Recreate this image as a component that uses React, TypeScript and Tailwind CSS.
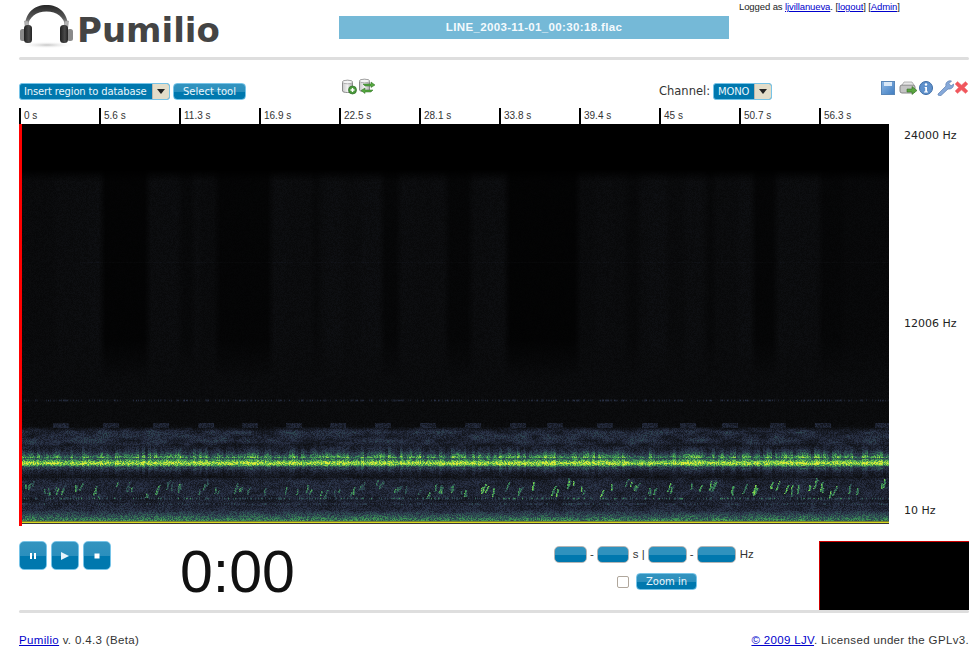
import { useEffect, useRef } from "react";

const ticks = ["0 s", "5.6 s", "11.3 s", "16.9 s", "22.5 s", "28.1 s", "33.8 s", "39.4 s", "45 s", "50.7 s", "56.3 s"];
const uiFont = "font-['DejaVu_Sans','Liberation_Sans',sans-serif]";
const armFont = "font-['Liberation_Sans',Arial,sans-serif]";
const btn =
  "border border-[#77c4e8] rounded-[4px] bg-[linear-gradient(#3394bf_0%,#2b8fbd_50%,#0078ae_52%,#0078ae_100%)] text-[#eaf6fb]";

function Spectrogram() {
  const ref = useRef<HTMLCanvasElement>(null);
  useEffect(() => {
    const c = ref.current;
    if (!c) return;
    const W = 870, H = 400;
    const ctx = c.getContext("2d");
    if (!ctx) return;
    const img = ctx.createImageData(W, H);
    let seed = 12345;
    const rnd = () => {
      seed = (seed * 1664525 + 1013904223) >>> 0;
      return seed / 4294967296;
    };
    const gauss = (y: number, c0: number, s: number) => Math.exp(-((y - c0) * (y - c0)) / (2 * s * s));
    const dark: [number, number, number][] = [
      [83, 128, 0.3], [161, 174, 0.7], [198, 251, 0.4], [294, 299, 0.7], [363, 379, 0.55], [428, 451, 0.5],
      [488, 558, 0.28], [608, 619, 0.7], [688, 694, 0.65], [734, 756, 0.45], [801, 824, 0.55], [824, 870, 0.7],
    ];
    const raw = new Float32Array(W);
    let cur = 1;
    for (let x = 0; x < W; x++) {
      if (x % 18 === 0) cur = 0.88 + rnd() * 0.25;
      let b = cur;
      for (const [a, z, k] of dark) if (x >= a && x <= z) b = k;
      raw[x] = b;
    }
    const band = new Float32Array(W);
    for (let x = 0; x < W; x++) {
      let s = 0, n = 0;
      for (let d = -3; d <= 3; d++) {
        if (x + d >= 0 && x + d < W) { s += raw[x + d]; n++; }
      }
      band[x] = s / n;
    }
    const stripe = new Float32Array(W);
    const dots = new Float32Array(W);
    const burst = new Float32Array(W);
    let st = 1;
    for (let x = 0; x < W; x++) {
      if (x % 3 === 0) st = 0.45 + rnd() * 0.95;
      stripe[x] = st;
      dots[x] = rnd() < 0.42 ? 0.6 + rnd() * 0.8 : 0.1;
      burst[x] = 0.7 + rnd() * 0.45;
    }
    for (let x = 1; x < W; x++) burst[x] = burst[x] * 0.5 + burst[x - 1] * 0.5;
    // coarse 2D noise for the blotchy blue layers
    const GX = 12, GY = 4;
    const gw = Math.ceil(W / GX) + 2, gh = Math.ceil(H / GY) + 2;
    const grid = new Float32Array(gw * gh);
    for (let i = 0; i < grid.length; i++) grid[i] = rnd();
    const patch = (x: number, y: number) => {
      const gx = x / GX, gy = y / GY;
      const ix = Math.floor(gx), iy = Math.floor(gy);
      const fx = gx - ix, fy = gy - iy;
      const a = grid[iy * gw + ix], b = grid[iy * gw + ix + 1];
      const d = grid[(iy + 1) * gw + ix], e = grid[(iy + 1) * gw + ix + 1];
      return (a * (1 - fx) + b * fx) * (1 - fy) + (d * (1 - fx) + e * fx) * fy;
    };
    const plates = [34, 84, 134, 179, 223, 267, 311, 356, 401, 446, 491, 528, 578, 623, 661, 703, 751, 796, 856];
    const field = new Float32Array(W * H);
    for (let x = 0; x < W; x++) {
      for (let yy = 0; yy < H; yy++) {
        const y = yy + 124;
        let v = 0;
        if (y >= 170 && y < 340) v = 0.052 * band[x] * Math.min(1, (y - 169) / 12);
        else if (y >= 340 && y < 424) {
          const t = Math.min(1, (y - 340) / 40);
          v = 0.052 * (band[x] * (1 - t) + t * 0.95);
        }
        if (y === 262 && x > 60) v += 0.016;
        if (y >= 399 && y <= 401) v += 0.1 * dots[x] * (y === 400 ? 1 : 0.4);
        if (y >= 424) {
          v = Math.max(v, 0.055);
          const up = Math.min(1, Math.max(0, (y - 426) / 5));
          const fade = y < 442 ? 1 : Math.max(0.2, 1 - (y - 442) / 9);
          v += 0.115 * up * fade * (0.35 + 1.3 * patch(x, yy));
          if (y >= 446 && y < 458) v += (0.03 + 0.022 * (y - 446)) * stripe[x];
          v += 0.42 * gauss(y, 463, 1.6) * burst[x];
          v += 0.42 * gauss(y, 461.5, 4) * (0.55 + 0.45 * stripe[x]);
          if (y >= 468 && y < 480) v += 0.08 * stripe[x] * (1 - (y - 468) / 12);
          if (y >= 478) v = Math.max(v, 0.1 + 0.07 * patch(x, yy));
          if (y >= 480 && y < 497) v += 0.03;
          if (y >= 500) v += 0.005 * (y - 500);
          if (y >= 510) v += 0.02 * (y - 510);
          if (y >= 497 && y <= 499) v += 0.17 * dots[x] * (y === 498 ? 1.2 : 0.5);
          if (y >= 503 && y <= 504) v += 0.07 * dots[(x + 37) % W];
        }
        field[yy * W + x] = v;
      }
    }
    for (const p of plates) {
      const w = 16 + ((p * 7) % 7);
      for (let x = p; x < Math.min(W, p + w); x++)
        for (let y = 423; y <= 427; y++) field[(y - 124) * W + x] = Math.max(field[(y - 124) * W + x], 0.15);
    }
    // bird chirps: small clusters of short, nearly upright strokes
    for (let cx = 6; cx < W - 6; cx += 7 + rnd() * 14) {
      const strong = cx > 450 ? 1.25 : 1;
      const n = 1 + Math.floor(rnd() * 4);
      const base = 485 + rnd() * 9;
      for (let k = 0; k < n; k++) {
        const x0 = cx + rnd() * 8;
        const y0 = base + rnd() * 5;
        const len = (3 + rnd() * 5) * strong;
        const amp = (0.3 + rnd() * 0.2) * strong;
        const slant = rnd() < 0.6 ? 0.15 : 0.45;
        for (let t = 0; t < len; t++) {
          const x = Math.floor(x0 + t * slant);
          const y = Math.floor(y0 - t);
          for (let dx = 0; dx < 2; dx++) {
            if (x + dx < W && y >= 470) {
              const idx = (y - 124) * W + x + dx;
              field[idx] = Math.max(field[idx], amp * (dx === 0 ? 1 : 0.75));
            }
          }
        }
      }
    }
    const stops: [number, number, number, number][] = [
      [0, 0, 0, 0],
      [0.06, 12, 13, 15],
      [0.12, 22, 26, 36],
      [0.22, 42, 50, 72],
      [0.34, 46, 82, 84],
      [0.52, 62, 150, 85],
      [0.72, 125, 205, 75],
      [1, 225, 235, 55],
    ];
    const cmap = (v: number) => {
      for (let i = 1; i < stops.length; i++) {
        if (v <= stops[i][0]) {
          const a = stops[i - 1], b = stops[i];
          const t = (v - a[0]) / (b[0] - a[0]);
          return [a[1] + (b[1] - a[1]) * t, a[2] + (b[2] - a[2]) * t, a[3] + (b[3] - a[3]) * t];
        }
      }
      return [225, 235, 55];
    };
    for (let yy = 0; yy < H; yy++) {
      for (let x = 0; x < W; x++) {
        const y = yy + 124;
        let v = field[yy * W + x];
        const amt = y < 420 ? 0.55 : 0.7;
        v = v * (1 - amt / 2 + rnd() * amt);
        let col = cmap(Math.min(1, Math.max(0, v)));
        if (y === 522) col = [214, 214, 30];
        if (y === 521) col = [120, 130, 50];
        if (y >= 523) col = [56, 56, 56];
        const o = (yy * W + x) * 4;
        img.data[o] = col[0];
        img.data[o + 1] = col[1];
        img.data[o + 2] = col[2];
        img.data[o + 3] = 255;
      }
    }
    ctx.putImageData(img, 0, 0);
  }, []);
  return <canvas ref={ref} width={870} height={400} className="block h-[400px] w-[870px]" />;
}

function Headphones() {
  return (
    <svg width="58" height="46" viewBox="0 0 58 46" className="shrink-0">
      <defs>
        <linearGradient id="band" x1="0" x2="0" y1="0" y2="1">
          <stop offset="0" stopColor="#262626" />
          <stop offset="0.6" stopColor="#5a5a5a" />
          <stop offset="1" stopColor="#c8c8c8" />
        </linearGradient>
        <radialGradient id="sh">
          <stop offset="0" stopColor="#c4c4c4" />
          <stop offset="1" stopColor="#fff" stopOpacity="0" />
        </radialGradient>
        <linearGradient id="cup" x1="0" x2="1" y1="0" y2="0">
          <stop offset="0" stopColor="#1f1f1f" />
          <stop offset="0.6" stopColor="#4a4a4a" />
          <stop offset="1" stopColor="#222" />
        </linearGradient>
      </defs>
      <ellipse cx="28" cy="40" rx="27" ry="3.5" fill="url(#sh)" />
      <path d="M6 22 C6 8 15 0 27.5 0 C40 0 49 8 49 22 L46.5 22 C45 12 38 6.5 27.5 6.5 C17 6.5 10 12 8.5 22 Z" fill="url(#band)" />
      <path d="M5.5 16 L9 16 L10.5 25 L6.5 25 Z" fill="#b5b5b5" stroke="#888" strokeWidth=".5" />
      <path d="M46 16 L49.5 16 L48.5 25 L44.5 25 Z" fill="#b5b5b5" stroke="#888" strokeWidth=".5" />
      <rect x="1" y="24" width="6" height="12" rx="2.5" fill="#8a8a8a" />
      <rect x="5" y="20" width="8" height="18" rx="3.5" fill="url(#cup)" />
      <rect x="48" y="24" width="6" height="12" rx="2.5" fill="#8a8a8a" />
      <rect x="41" y="20" width="8" height="18" rx="3.5" fill="url(#cup)" />
    </svg>
  );
}

function Db({ children }: { children?: React.ReactNode }) {
  return (
    <svg width="18" height="16" viewBox="0 0 18 16">
      <defs>
        <linearGradient id="dbg" x1="0" x2="1" y1="0" y2="0">
          <stop offset="0" stopColor="#c9c9c9" />
          <stop offset="0.5" stopColor="#f2f2f2" />
          <stop offset="1" stopColor="#aaa" />
        </linearGradient>
      </defs>
      <path d="M1.5 3 C1.5 .8 11.5 .8 11.5 3 L11.5 12 C11.5 14 1.5 14 1.5 12 Z" fill="url(#dbg)" stroke="#8c8c8c" />
      <ellipse cx="6.5" cy="3" rx="5" ry="1.8" fill="#f4f4f4" stroke="#9a9a9a" strokeWidth=".7" />
      {children}
    </svg>
  );
}

function Sel({ label, w }: { label: string; w: string }) {
  return (
    <span className={`inline-flex h-[17px] items-stretch overflow-hidden rounded-[3px] border border-[#77c4e8] bg-[#0078ae] text-[10px] tracking-[-0.15px] text-[#eaf6fb] ${uiFont} ${w}`}>
      <span className="flex-1 whitespace-nowrap pl-[4px] leading-[15px]">{label}</span>
      <span className="flex w-[17px] shrink-0 items-center justify-center border-l border-[#bdb5aa] bg-[#e3ddc9]">
        <svg width="8" height="5" viewBox="0 0 8 5">
          <path d="M0 0H8L4 5Z" fill="#222" />
        </svg>
      </span>
    </span>
  );
}

function Range({ w }: { w: string }) {
  return (
    <span className={`inline-block h-[17px] rounded-[5px] border border-[#b5b5b5] bg-[linear-gradient(#2f92be_0%,#2f92be_50%,#0078ae_52%,#0078ae_100%)] ${w}`} />
  );
}

function Transport({ children }: { children: React.ReactNode }) {
  return (
    <button className="flex h-[29px] w-[28px] items-center justify-center rounded-[5px] border border-[#77c4e8] bg-[linear-gradient(#3394bf_0%,#2b8fbd_50%,#0078ae_52%,#0078ae_100%)]">
      {children}
    </button>
  );
}

export default function App() {
  return (
    <div className={`h-[659px] w-[980px] overflow-hidden bg-white pl-[19px] pr-[11px] text-[#222] ${armFont}`}>
      <header className="relative flex h-[57px] items-start">
        <div className="flex w-[320px] items-start pt-[5px]">
          <Headphones />
          <span className="mt-[5px] font-['DejaVu_Sans',sans-serif] text-[34px] font-bold leading-[40px] text-[#444]">Pumilio</span>
        </div>
        <div className="mt-[16px] flex h-[23px] w-[390px] items-center justify-center bg-[#75b9d7] text-[11.5px] font-bold tracking-[0.35px] text-[#f4fafd]">
          LINE_2003-11-01_00:30:18.flac
        </div>
        <div className="ml-[10px] mt-[1px] text-[9.5px] leading-[12px] tracking-[-0.1px]">
          Logged as <a className="text-[#0000cc] underline">ljvillanueva</a>. [<a className="text-[#0000cc] underline">logout</a>] [<a className="text-[#0000cc] underline">Admin</a>]
        </div>
      </header>
      <div className="h-[3px] w-[950px] rounded-full bg-[#dedede]" />

      <div className="relative flex h-[48px] items-start pt-[23px]">
        <div className={`flex w-[322px] gap-[3px] ${uiFont}`}>
          <Sel label="Insert region to database" w="w-[151px]" />
          <button className={`h-[17px] w-[73px] text-center text-[10px] leading-[14px] ${btn}`}>Select tool</button>
        </div>
        <div className="-mt-[5px] flex w-[318px] items-start">
          <span className="mt-[1px]">
            <Db>
              <circle cx="11.5" cy="11" r="4" fill="#4b9a3c" stroke="#2e6e25" strokeWidth=".7" />
              <path d="M9.5 11H13.5M11.5 9V13" stroke="#fff" strokeWidth="1.4" />
            </Db>
          </span>
          <span className="-ml-[1px]">
            <Db>
              <path d="M5 6 H13 V4 L17 7 L13 9.5 V8 H7Z" fill="#55a83f" stroke="#2e6e25" strokeWidth=".5" />
              <path d="M15 12 H7 V10 L3 12.5 L7 15.5 V14 H13Z" fill="#55a83f" stroke="#2e6e25" strokeWidth=".5" />
            </Db>
          </span>
        </div>
        <div className={`flex items-center gap-[3px] text-[11.5px] text-[#333] ${uiFont}`}>
          <span>Channel:</span>
          <Sel label="MONO" w="w-[59px]" />
        </div>
        <div className="absolute right-0 top-[20px] flex items-center">
          <svg width="88" height="16" viewBox="0 0 88 16">
            <defs>
              <linearGradient id="sv" x1="0" x2="1" y1="0" y2="1">
                <stop offset="0" stopColor="#8fb9e6" />
                <stop offset="1" stopColor="#3f7cc0" />
              </linearGradient>
            </defs>
            <rect x=".5" y="1.5" width="13" height="13" fill="url(#sv)" stroke="#5a87b8" />
            <rect x="3" y="2" width="8" height="4" fill="#d9e8f7" />
            <rect x="19" y="5" width="15" height="8" rx="2" fill="#c4c4c4" stroke="#888" />
            <path d="M21 5 L23 2 H31 L33 5Z" fill="#e6e6e6" stroke="#999" strokeWidth=".7" />
            <path d="M26 9 H31 V6.5 L36 10.5 L31 14.5 V12 H26Z" fill="#5aa63f" stroke="#366f25" strokeWidth=".6" />
            <circle cx="45" cy="8" r="6.5" fill="#5f91cc" stroke="#3d6ca5" />
            <circle cx="45" cy="4.5" r="1.2" fill="#fff" />
            <path d="M43.7 7H46V11.5H47V12.5H43V11.5H44.2V8H43.7Z" fill="#fff" />
            <path d="M57 14 L65 6 C64 3 67 0 70.5 1 L68 3.5 L70 6 L72.5 4 C73 7.5 70 9.5 67 9 L60 15.5 C58.5 16 56.5 15.5 57 14Z" fill="#86a9d9" stroke="#5d80b2" strokeWidth=".7" />
            <path d="M74 4 L76.5 1.5 L80.5 5 L84.5 1.5 L87 4 L83.5 7.5 L87 11 L84.5 13.5 L80.5 10 L76.5 13.5 L74 11 L77.5 7.5Z" fill="#f1565d" stroke="#e88" strokeWidth=".5" />
          </svg>
        </div>
      </div>

      <div className="relative flex">
        <div className="w-[870px]">
          <div className="flex h-[16px]">
            {ticks.map((t) => (
              <div key={t} className="w-[80px] shrink-0 border-l-2 border-black pl-[3px] text-[10px] leading-[15px] text-[#333]">
                {t}
              </div>
            ))}
          </div>
          <div className="relative h-[400px]">
            <Spectrogram />
            <div className="absolute left-0 top-0 h-[402px] w-[3px] bg-[#ff0000]" />
          </div>
        </div>
        <div className={`flex w-[80px] flex-col justify-between pb-[6px] pl-[15px] pt-[21px] text-[11px] leading-[14px] text-[#222] ${uiFont}`}>
          <span>24000 Hz</span>
          <span>12006 Hz</span>
          <span>10 Hz</span>
        </div>
      </div>

      <div className="mt-[17px] flex h-[69px] items-start">
        <div className="flex w-[161px] gap-[4px]">
          <Transport>
            <svg width="8" height="8" viewBox="0 0 8 8"><path d="M1 1H3V7H1ZM5 1H7V7H5Z" fill="#fff" /></svg>
          </Transport>
          <Transport>
            <svg width="10" height="10" viewBox="0 0 10 10"><path d="M1 1L9 5L1 9Z" fill="#e6f4fb" /></svg>
          </Transport>
          <Transport>
            <svg width="8" height="8" viewBox="0 0 8 8"><path d="M1.5 1.5H6.5V6.5H1.5Z" fill="#fff" /></svg>
          </Transport>
        </div>
        <div className="w-[374px] text-[59px] leading-[62px] text-[#111]">0:00</div>
        <div className={`flex w-[265px] flex-col ${armFont}`}>
          <div className="mt-[5px] flex h-[17px] items-center text-[11.5px] text-[#333]">
            <Range w="w-[33px]" />
            <span className="mx-[3px]">-</span>
            <Range w="w-[32px]" />
            <span className="ml-[4px] mr-[3px] whitespace-nowrap">s |</span>
            <Range w="w-[39px]" />
            <span className="mx-[3px]">-</span>
            <Range w="w-[39px]" />
            <span className="ml-[4px]">Hz</span>
          </div>
          <div className="mt-[10px] flex items-center pl-[63px]">
            <input type="checkbox" className="h-[12px] w-[12px] appearance-none rounded-[2px] border border-[#b0a79c] bg-white" />
            <button className={`ml-[7px] h-[17px] w-[61px] text-center text-[10px] leading-[14px] ${uiFont} ${btn}`}>Zoom in</button>
          </div>
        </div>
        <div className="h-[69px] w-[150px] border-l border-t border-[#cc0000] bg-black" />
      </div>
      <div className="h-[3px] w-[950px] rounded-full bg-[#dedede]" />

      <footer className="mt-[20px] flex justify-between text-[11.5px] leading-[14px] tracking-[0.34px] text-[#333]">
        <span><a className="text-[#0000cc] underline">Pumilio</a> v. 0.4.3 (Beta)</span>
        <span><a className="text-[#0000cc] underline">© 2009 LJV</a>. Licensed under the GPLv3.</span>
      </footer>
    </div>
  );
}
